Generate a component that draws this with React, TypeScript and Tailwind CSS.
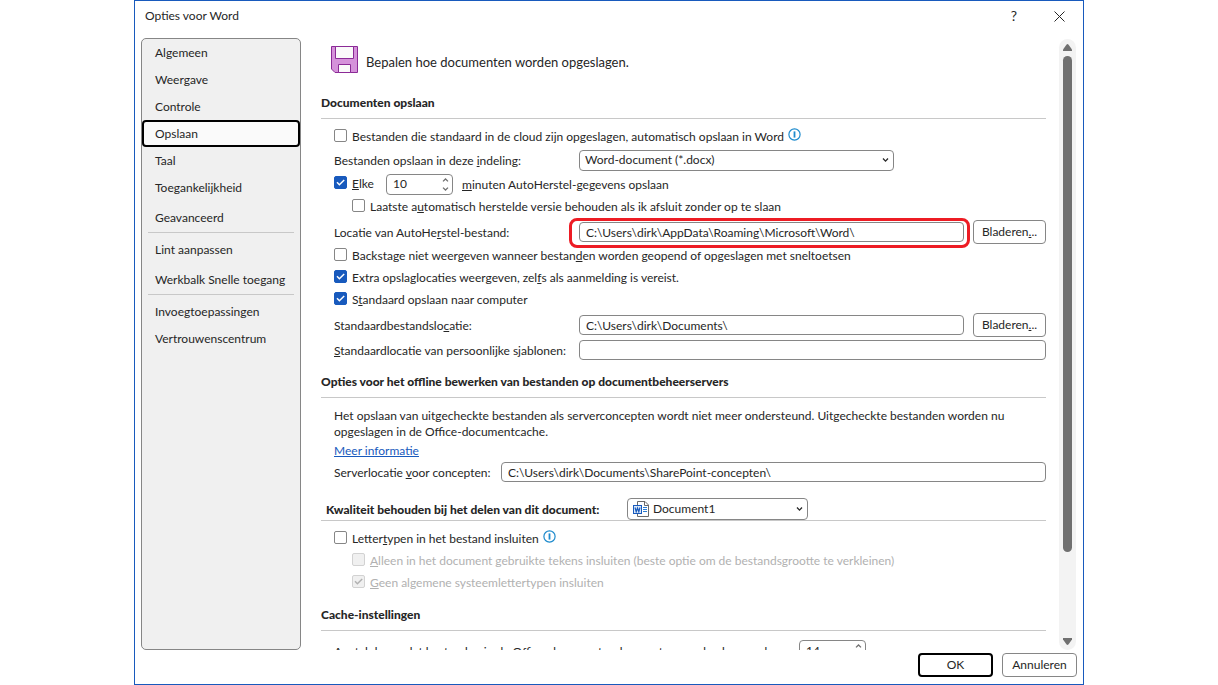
import { useState, type ReactNode } from "react";

type Page = { label: string; className?: string; separator?: boolean };

const pages: Page[] = [
  { label: "Algemeen" },
  { label: "Weergave" },
  { label: "Controle" },
  { label: "Opslaan" },
  { label: "Taal" },
  { label: "Toegankelijkheid" },
  { label: "Geavanceerd", className: "mt-[3px]" },
  { label: "Lint aanpassen", separator: true },
  { label: "Werkbalk Snelle toegang", className: "mt-[3px]" },
  { label: "Invoegtoepassingen", separator: true },
  { label: "Vertrouwenscentrum" },
];

const fieldClass =
  "h-5 min-w-0 flex-1 rounded-[4px] border border-[#868686] bg-white px-[6px] text-[12px] leading-4";

function CheckBox({
  id,
  defaultChecked,
  disabled,
  children,
}: {
  id: string;
  defaultChecked?: boolean;
  disabled?: boolean;
  children: ReactNode;
}) {
  return (
    <div className="flex items-center">
      <span className="mb-[3px] grid size-[13px] shrink-0">
        <input
          id={id}
          type="checkbox"
          defaultChecked={defaultChecked}
          disabled={disabled}
          className="peer col-start-1 row-start-1 size-[13px] appearance-none rounded-[2px] border border-[#868686] bg-white checked:border-[#185abd] checked:bg-[#185abd] disabled:border-[#d2d2d2] disabled:bg-[#f0f0f0]"
        />
        <svg
          viewBox="0 0 13 13"
          className="pointer-events-none col-start-1 row-start-1 hidden size-[13px] text-white peer-checked:block peer-disabled:text-[#b1b1b1]"
          fill="none"
          stroke="currentColor"
          strokeWidth="1.5"
        >
          <path d="M3 6.3 L5.4 8.7 L10.2 4" />
        </svg>
      </span>
      <label htmlFor={id} className={disabled ? "pl-[5px] text-[#b1b1b1]" : "pl-[5px]"}>
        {children}
      </label>
    </div>
  );
}

function Info() {
  return (
    <svg viewBox="0 0 13 13" className="mb-[6px] ml-1 size-[13px] shrink-0" fill="none" stroke="#1e8bcd">
      <circle cx="6.5" cy="6.5" r="5.6" strokeWidth="1.2" />
      <path d="M6.5 3.4 V9.6" strokeWidth="1.8" />
    </svg>
  );
}

function Chevron() {
  return (
    <svg
      viewBox="0 0 7 5"
      className="pointer-events-none absolute top-1/2 right-[5px] h-[5px] w-[7px] -translate-y-1/2"
      fill="none"
      stroke="#262626"
      strokeWidth="1.3"
    >
      <path d="M1 1 L3.5 3.6 L6 1" />
    </svg>
  );
}

function Spinner({ id, value, label }: { id: string; value: number; label: string }) {
  const [n, setN] = useState(value);
  return (
    <div className="flex h-[21px] w-[67px] rounded-[4px] border border-[#868686] bg-white">
      <input
        id={id}
        aria-label={label}
        value={n}
        onChange={(e) => setN(Number(e.target.value) || 0)}
        className="w-[51px] min-w-0 bg-transparent pl-[6px] text-[12px] outline-none"
      />
      <div className="flex flex-1 flex-col items-center justify-between py-[3px]">
        <button aria-label="Omhoog" onClick={() => setN(n + 1)}>
          <svg viewBox="0 0 7 4" className="block h-1 w-[7px]" fill="none" stroke="#707070" strokeWidth="1.3">
            <path d="M1 3.4 L3.5 1 L6 3.4" />
          </svg>
        </button>
        <button aria-label="Omlaag" onClick={() => setN(Math.max(0, n - 1))}>
          <svg viewBox="0 0 7 4" className="block h-1 w-[7px]" fill="none" stroke="#707070" strokeWidth="1.3">
            <path d="M1 0.6 L3.5 3 L6 0.6" />
          </svg>
        </button>
      </div>
    </div>
  );
}

function Browse() {
  return (
    <button className="h-6 w-[73px] shrink-0 rounded-[4px] border border-[#868686] bg-white">
      Bladeren<u>.</u>..
    </button>
  );
}

function Heading({ children }: { children: ReactNode }) {
  return <h2 className="h-[26px] border-b border-[#c8c8c8] leading-5 font-black">{children}</h2>;
}

function SaveIcon() {
  return (
    <svg viewBox="0 0 27 27" className="size-[27px]" stroke="#8b2a96">
      <path d="M0.5 0.5 H26.5 V26.5 H4 L0.5 23 Z" fill="#d592da" />
      <path d="M4.5 0.5 H22.5 V12.5 H4.5 Z" fill="#fafafa" />
      <path d="M7.5 26.5 V18.5 H19.5 V26.5 Z" fill="#fafafa" />
    </svg>
  );
}

function WordIcon() {
  return (
    <svg viewBox="0 0 16 16" className="pointer-events-none absolute top-[3px] left-[6px] size-4" fill="none">
      <path d="M4.5 0.5 H12 L15.5 4 V15.5 H4.5 Z" fill="#fff" stroke="#6a6a6a" />
      <path d="M11.5 0.5 V4.5 H15.5" stroke="#6a6a6a" />
      <path d="M10 6.5 H14 M10 8.5 H14 M10 10.5 H14" stroke="#2b7cd3" />
      <rect x="0.5" y="4.5" width="8" height="8" fill="#dce9f8" stroke="#185abd" />
      <path d="M2 6.5 L3.2 10.8 L4.5 7 L5.8 10.8 L7 6.5" stroke="#185abd" strokeWidth="1.2" />
    </svg>
  );
}

function Sidebar({ active, onSelect }: { active: string; onSelect: (label: string) => void }) {
  return (
    <nav className="flex w-40 shrink-0 flex-col rounded-[5px] border border-[#868686] bg-[#f0f0f0]">
      {pages.map((page) => (
        <div key={page.label} className={page.className}>
          {page.separator && <hr className="mx-[6px] mt-px mb-[3px] border-[#c8c8c8]" />}
          <button
            onClick={() => onSelect(page.label)}
            className={
              active === page.label
                ? "block h-[27px] w-full rounded-[4px] border-2 border-black bg-[#fafafa] pl-[11px] text-left"
                : "block h-[27px] w-full pl-[13px] text-left"
            }
          >
            {page.label}
          </button>
        </div>
      ))}
    </nav>
  );
}

function SaveOptions() {
  return (
    <main className="min-w-0 flex-1 overflow-hidden">
      <div className="flex items-center gap-2 pt-[7px] pl-[10px]">
        <SaveIcon />
        <h1 className="pt-1 text-[13px] leading-5">Bepalen hoe documenten worden opgeslagen.</h1>
      </div>

      <section className="pt-5">
        <Heading>Documenten opslaan</Heading>
        <div className="pt-[7px] pl-[13px]">
          <div className="flex h-[22px] items-center">
            <CheckBox id="cloud">
              Bestanden die standaard in de cloud zijn opgeslagen, automatisch opslaan in Word
            </CheckBox>
            <Info />
          </div>

          <div className="mt-px flex h-[22px] items-center">
            <label htmlFor="format" className="w-[245px] pt-[2px]">
              Bestanden opslaan in deze <u>i</u>ndeling:
            </label>
            <div className="relative w-[315px]">
              <select
                id="format"
                className="block h-[21px] w-full appearance-none rounded-[4px] border border-[#868686] bg-white px-[5px] text-[12px] leading-4"
              >
                <option>Word-document (*.docx)</option>
              </select>
              <Chevron />
            </div>
          </div>

          <div className="mt-[2px] flex h-[22px] items-center">
            <div className="w-[52px]">
              <CheckBox id="every" defaultChecked>
                <u>E</u>lke
              </CheckBox>
            </div>
            <Spinner id="minutes" value={10} label="Minuten" />
            <label htmlFor="minutes" className="pt-[2px] pl-[9px]">
              <u>m</u>inuten AutoHerstel-gegevens opslaan
            </label>
          </div>

          <div className="mt-px flex h-[22px] items-center pl-[18px]">
            <CheckBox id="keep">
              Laatste a<u>u</u>tomatisch herstelde versie behouden als ik afsluit zonder op te slaan
            </CheckBox>
          </div>

          <div className="mt-[2px] flex h-6 items-center">
            <label htmlFor="recover" className="w-[245px] pt-[2px]">
              Locatie van AutoHe<u>r</u>stel-bestand:
            </label>
            <div className="relative flex flex-1">
              <input id="recover" defaultValue="C:\Users\dirk\AppData\Roaming\Microsoft\Word\" className={fieldClass} />
              <span className="pointer-events-none absolute -top-1 -right-[6px] -bottom-[6px] -left-[10px] rounded-[8px] border-3 border-[#ed1c24]" />
            </div>
            <div className="pl-[9px]">
              <Browse />
            </div>
          </div>

          <div className="mt-px flex h-[22px] items-center">
            <CheckBox id="backstage">
              Backstage niet weergeven wanneer bestan<u>d</u>en worden geopend of opgeslagen met sneltoetsen
            </CheckBox>
          </div>
          <div className="flex h-[22px] items-center">
            <CheckBox id="extra" defaultChecked>
              Extra opslaglocaties weergeven, zel<u>f</u>s als aanmelding is vereist.
            </CheckBox>
          </div>
          <div className="flex h-[22px] items-center">
            <CheckBox id="local" defaultChecked>
              S<u>t</u>andaard opslaan naar computer
            </CheckBox>
          </div>

          <div className="mt-[2px] flex h-6 items-center">
            <label htmlFor="location" className="w-[245px] pt-[2px]">
              Standaardbestandslo<u>c</u>atie:
            </label>
            <input id="location" defaultValue="C:\Users\dirk\Documents\" className={fieldClass} />
            <div className="pl-[9px]">
              <Browse />
            </div>
          </div>
          <div className="mt-[3px] flex h-5 items-center">
            <label htmlFor="templates" className="w-[245px] pt-[2px]">
              <u>S</u>tandaardlocatie van persoonlijke sjablonen:
            </label>
            <input id="templates" className={fieldClass} />
          </div>
        </div>
      </section>

      <section className="pt-3">
        <Heading>Opties voor het offline bewerken van bestanden op documentbeheerservers</Heading>
        <div className="pt-[10px] pl-[13px]">
          <p>
            Het opslaan van uitgecheckte bestanden als serverconcepten wordt niet meer ondersteund. Uitgecheckte
            bestanden worden nu opgeslagen in de Office-documentcache.
          </p>
          <a href="#meer" className="mt-[3px] block w-fit text-[#185abd] underline">
            Meer informatie
          </a>
          <div className="mt-[3px] flex h-5 items-center">
            <label htmlFor="drafts" className="w-[167px] pt-[2px]">
              Serverlocatie <u>v</u>oor concepten:
            </label>
            <input id="drafts" defaultValue="C:\Users\dirk\Documents\SharePoint-concepten\" className={fieldClass} />
          </div>
        </div>
      </section>

      <section className="pt-4">
        <div className="flex h-[23px] items-center border-b border-[#c8c8c8] pl-[5px]">
          <label htmlFor="document" className="w-[301px] pt-[2px] font-black">
            Kwaliteit behouden bi<u>j</u> het delen van dit document:
          </label>
          <div className="relative w-[181px]">
            <select
              id="document"
              className="block h-[22px] w-full appearance-none rounded-[4px] border border-[#868686] bg-white pl-[25px] text-[12px] leading-4"
            >
              <option>Document1</option>
            </select>
            <WordIcon />
            <Chevron />
          </div>
        </div>
        <div className="pt-[7px] pl-[13px]">
          <div className="flex h-[22px] items-center">
            <CheckBox id="fonts">
              Letter<u>t</u>ypen in het bestand insluiten
            </CheckBox>
            <Info />
          </div>
          <div className="flex h-[22px] items-center pl-[18px]">
            <CheckBox id="used" disabled>
              <u>A</u>lleen in het document gebruikte tekens insluiten (beste optie om de bestandsgrootte te verkleinen)
            </CheckBox>
          </div>
          <div className="flex h-[22px] items-center pl-[18px]">
            <CheckBox id="system" defaultChecked disabled>
              <u>G</u>een algemene systeemlettertypen insluiten
            </CheckBox>
          </div>
        </div>
      </section>

      <section className="pt-[11px]">
        <Heading>Cache-instellingen</Heading>
        <div className="flex items-start pt-[9px] pl-[13px]">
          <label htmlFor="days" className="w-[465px] pt-1">
            Aantal dagen dat bestanden in de Office-documentcache moeten worden bewaard:
          </label>
          <Spinner id="days" value={14} label="Dagen" />
        </div>
      </section>
    </main>
  );
}

function ScrollBar() {
  return (
    <div className="ml-[13px] flex w-[17px] shrink-0 flex-col items-center rounded-full bg-[#f3f3f3] py-[5px]">
      <svg viewBox="0 0 9 7" className="h-[7px] w-[9px]" fill="#707070">
        <path d="M3.6 0.5 Q4.5 -0.4 5.4 0.5 L9 5.5 V7 H0 V5.5 Z" />
      </svg>
      <div className="mt-[5px] mb-[6px] flex w-[9px] flex-1 flex-col">
        <div className="flex-[496] rounded-full bg-[#707070]" />
        <div className="flex-[80]" />
      </div>
      <svg viewBox="0 0 9 7" className="h-[7px] w-[9px]" fill="#707070">
        <path d="M0 0 H9 V1.5 L5.4 6.5 Q4.5 7.4 3.6 6.5 L0 1.5 Z" />
      </svg>
    </div>
  );
}

export default function App() {
  const [active, setActive] = useState("Opslaan");

  return (
    <div className="h-screen bg-white px-[134px] font-['Lato','Open_Sans',sans-serif] text-[12px] leading-4 text-[#262626]">
      <div role="dialog" aria-label="Opties voor Word" className="flex h-full flex-col border border-[#185abd] bg-white">
        <header className="flex h-[37px] shrink-0 items-start justify-between pr-[18px] pl-[10px]">
          <h1 className="pt-[7px]">Opties voor Word</h1>
          <div className="flex items-start gap-[34px] pt-[7px]">
            <button aria-label="Help" className="w-3 text-[14px] leading-4">
              ?
            </button>
            <button aria-label="Sluiten" className="pt-[3px]">
              <svg viewBox="0 0 11 11" className="block size-[11px]" stroke="#262626" strokeWidth="1">
                <path d="M0.5 0.5 L10.5 10.5 M10.5 0.5 L0.5 10.5" />
              </svg>
            </button>
          </div>
        </header>

        <div className="flex min-h-0 flex-1 pr-[7px] pl-[6px]">
          <Sidebar active={active} onSelect={setActive} />
          <div className="flex min-w-0 flex-1 pt-px pl-5">
            <SaveOptions />
            <ScrollBar />
          </div>
        </div>

        <footer className="flex h-[34px] shrink-0 justify-end gap-[9px] pt-[3px] pr-[6px]">
          <button className="h-6 w-[75px] rounded-[4px] border-2 border-black bg-white">OK</button>
          <button className="h-6 w-[75px] rounded-[4px] border border-[#868686] bg-white">Annuleren</button>
        </footer>
      </div>
    </div>
  );
}
